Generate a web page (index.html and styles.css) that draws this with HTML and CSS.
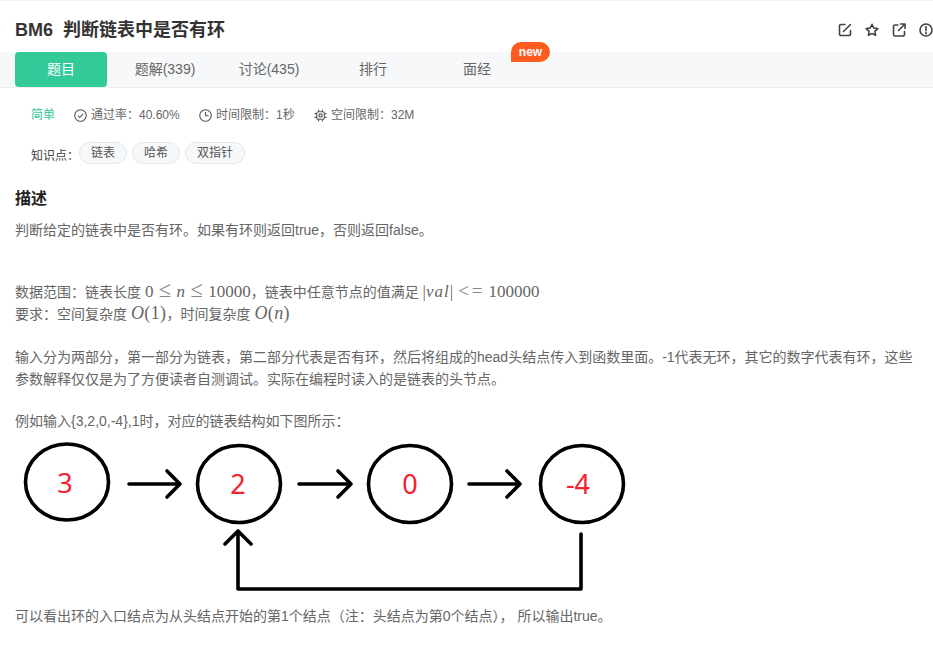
FILE: index.html
```html
<!DOCTYPE html>
<html lang="zh-CN">
<head>
<meta charset="utf-8">
<title>BM6 判断链表中是否有环</title>
<link rel="stylesheet" href="styles.css">
</head>
<body>
<div class="top-strip"></div>
<header class="head">
  <h1 class="title">BM6&nbsp; 判断链表中是否有环</h1>
  <div class="actions">
    <svg class="act" viewBox="0 0 14 14"><path d="M7 1.500H3a1.500 1.500 0 0 0-1.500 1.500v8A1.500 1.500 0 0 0 3 12.500h8a1.500 1.500 0 0 0 1.500-1.500V7.500M5.500 8.500 12.500 1.500"/></svg>
    <svg class="act" viewBox="0 0 14 14"><path d="M7 1.300 8.800 5l4 .6-2.900 2.800.7 4L7 10.500l-3.600 1.900.7-4L1.200 5.600l4-.6z"/></svg>
    <svg class="act" viewBox="0 0 14 14"><path d="M6 2H3a1.500 1.500 0 0 0-1.500 1.500v8A1.500 1.500 0 0 0 3 13h8a1.500 1.500 0 0 0 1.500-1.500V8.500M6.500 7.500 13 1M8.500 1H13v4.500"/></svg>
    <svg class="act" viewBox="0 0 14 14"><circle cx="7" cy="7" r="6"/><path d="M7 3.500v4.300M7 9.500v1.200"/></svg>
  </div>
</header>
<nav class="tabs">
  <a class="tab tab-active">题目</a>
  <a class="tab">题解(339)</a>
  <a class="tab">讨论(435)</a>
  <a class="tab">排行</a>
  <a class="tab tab-new">面经<span class="badge">new</span></a>
</nav>
<section class="meta">
  <span class="level">简单</span>
  <span class="stat stat-pass"><svg class="ico" viewBox="0 0 12 12"><circle cx="6" cy="6" r="5.300"/><path d="M3.600 6.200 5.300 7.900 8.500 4.500"/></svg>通过率：40.60%</span>
  <span class="stat stat-time"><svg class="ico" viewBox="0 0 12 12"><circle cx="6" cy="6" r="5.300"/><path d="M6 2.800V6.300H9"/></svg>时间限制：1秒</span>
  <span class="stat"><svg class="ico" viewBox="0 0 12 12"><rect x="2.500" y="2.500" width="7" height="7" rx="1.500"/><rect x="4.700" y="4.700" width="2.600" height="2.600"/><path d="M4.300 .5v2M7.700 .5v2M4.300 9.500v2M7.700 9.500v2M.5 4.300h2M.5 7.700h2M9.500 4.300h2M9.500 7.700h2"/></svg>空间限制：32M</span>
</section>
<section class="knowledge">
  <span class="k-label">知识点：</span>
  <span class="tag">链表</span>
  <span class="tag">哈希</span>
  <span class="tag">双指针</span>
</section>
<main class="desc">
  <h2 class="desc-title">描述</h2>
  <p class="line l-first">判断给定的链表中是否有环。如果有环则返回true，否则返回false。</p>
  <p class="line l-range">数据范围：链表长度 <span class="m">0<span class="rel">≤</span><i>n</i><span class="rel">≤</span>10000</span>，链表中任意节点的值满足 <span class="m">|<i class="val">val</i>|<span class="rel rel-tight">&lt;=</span>100000</span></p>
  <p class="line l-req">要求：空间复杂度 <span class="m m-big"><i>O</i>(1)</span>，时间复杂度 <span class="m m-big"><i>O</i>(<i>n</i>)</span></p>
  <p class="line l-input">输入分为两部分，第一部分为链表，第二部分代表是否有环，然后将组成的head头结点传入到函数里面。-1代表无环，其它的数字代表有环，这些参数解释仅仅是为了方便读者自测调试。实际在编程时读入的是链表的头节点。</p>
  <p class="line l-eg">例如输入{3,2,0,-4},1时，对应的链表结构如下图所示：</p>
  <svg class="diagram" viewBox="0 0 630 160" width="630" height="160">
    <g class="shape">
      <ellipse cx="52" cy="42" rx="41.500" ry="38"/>
      <ellipse cx="224" cy="44" rx="41.500" ry="38.500"/>
      <ellipse cx="395" cy="44" rx="41.500" ry="38.500"/>
      <ellipse cx="567" cy="44" rx="41.500" ry="38.500"/>
      <path d="M114 44H165M152 31 165 44 152 57"/>
      <path d="M284 44H336M323 31 336 44 323 57"/>
      <path d="M454 44H505M492 31 505 44 492 57"/>
      <path d="M566 94V149H223V91M210 104 223 91 236 104"/>
    </g>
    <g class="num">
      <text x="50" y="53">3</text>
      <text x="223" y="54">2</text>
      <text x="395" y="54">0</text>
      <text x="563" y="54">-4</text>
    </g>
  </svg>
  <p class="line l-last">可以看出环的入口结点为从头结点开始的第1个结点（注：头结点为第0个结点）， 所以输出true。</p>
</main>
</body>
</html>
```

FILE: styles.css
```css
* { box-sizing: border-box; }
html, body { margin: 0; padding: 0; }
body {
  width: 933px;
  height: 653px;
  overflow: hidden;
  background: #fff;
  font-family: "Liberation Sans", "Noto Sans CJK SC", sans-serif;
  color: #666;
}
.top-strip { height: 1px; background: #f5f5f5; }
.head {
  height: 51px;
  padding: 15px 0 0 15px;
  display: flex;
  justify-content: space-between;
}
.title {
  margin: 0;
  font-size: 18px;
  line-height: 28px;
  font-weight: 700;
  color: #333;
}
.actions { display: flex; gap: 13px; padding: 7px 0 0; }
.act {
  width: 14px;
  height: 14px;
  fill: none;
  stroke: #444;
  stroke-width: 1.600;
  stroke-linecap: round;
  stroke-linejoin: round;
}
.tabs {
  height: 36px;
  padding-left: 15px;
  display: flex;
  gap: 12px;
  background: #f7f8fa;
  border-bottom: 1px solid #eeeeee;
}
.tab {
  position: relative;
  width: 92px;
  height: 35px;
  font-size: 14px;
  line-height: 35px;
  text-align: center;
  color: #666;
}
.tab-active {
  background: #32ca99;
  border-radius: 4px;
  color: #fff;
}
.badge {
  position: absolute;
  left: 80px;
  top: -10px;
  width: 39px;
  height: 20px;
  background: #ff5a1f;
  border-radius: 10px 10px 10px 0;
  color: #fff;
  font-size: 12px;
  font-weight: 700;
  line-height: 20px;
  text-align: center;
}
.meta {
  height: 20px;
  margin-top: 17px;
  padding-left: 31px;
  display: flex;
  align-items: center;
  font-size: 12px;
  line-height: 20px;
  color: #666;
}
.level { color: #32ca99; width: 43px; }
.stat { display: flex; align-items: center; gap: 4px; }
.stat-pass { width: 125px; }
.stat-time { width: 115px; }
.ico {
  width: 13px;
  height: 13px;
  fill: none;
  stroke: #555;
  stroke-width: 1;
}
.knowledge {
  height: 22px;
  margin-top: 17px;
  padding-left: 31px;
  display: flex;
  align-items: center;
  font-size: 12px;
  color: #555;
}
.k-label { width: 48px; color: #444; padding-top: 3px; }
.tag {
  height: 22px;
  margin-right: 5px;
  padding: 0 11px;
  border: 1px solid #e5e6e8;
  border-radius: 11px;
  background: #f7f8fa;
  line-height: 20px;
}
.desc { padding: 0 15px; }
.desc-title {
  margin: 24px 0 0;
  font-size: 16px;
  line-height: 22px;
  font-weight: 700;
  color: #222;
}
.line { margin: 0; font-size: 14px; line-height: 22px; color: #666; }
.l-first { margin-top: 9px; }
.l-range { margin-top: 40px; }
.l-input { margin-top: 21px; }
.l-eg { margin-top: 20px; }
.l-last { margin-top: 5px; }
.m { font-family: "Liberation Serif", serif; font-size: 17px; line-height: 0; color: #666; }
.m-big { font-size: 18px; letter-spacing: 0.4px; }
.rel { margin: 0 5.400px; font-size: 22.500px; line-height: 0; color: #888; }
.rel-tight { font-size: 19px; letter-spacing: 3px; margin: 0 3px 0 5px; }
.val { letter-spacing: 1px; }
.diagram { display: block; margin-top: 8px; }
.shape { fill: none; stroke: #000; stroke-width: 3.600; stroke-linecap: round; stroke-linejoin: round; }
.num { fill: #f5222d; font-family: "Noto Sans", sans-serif; font-size: 27px; text-anchor: middle; }
```
